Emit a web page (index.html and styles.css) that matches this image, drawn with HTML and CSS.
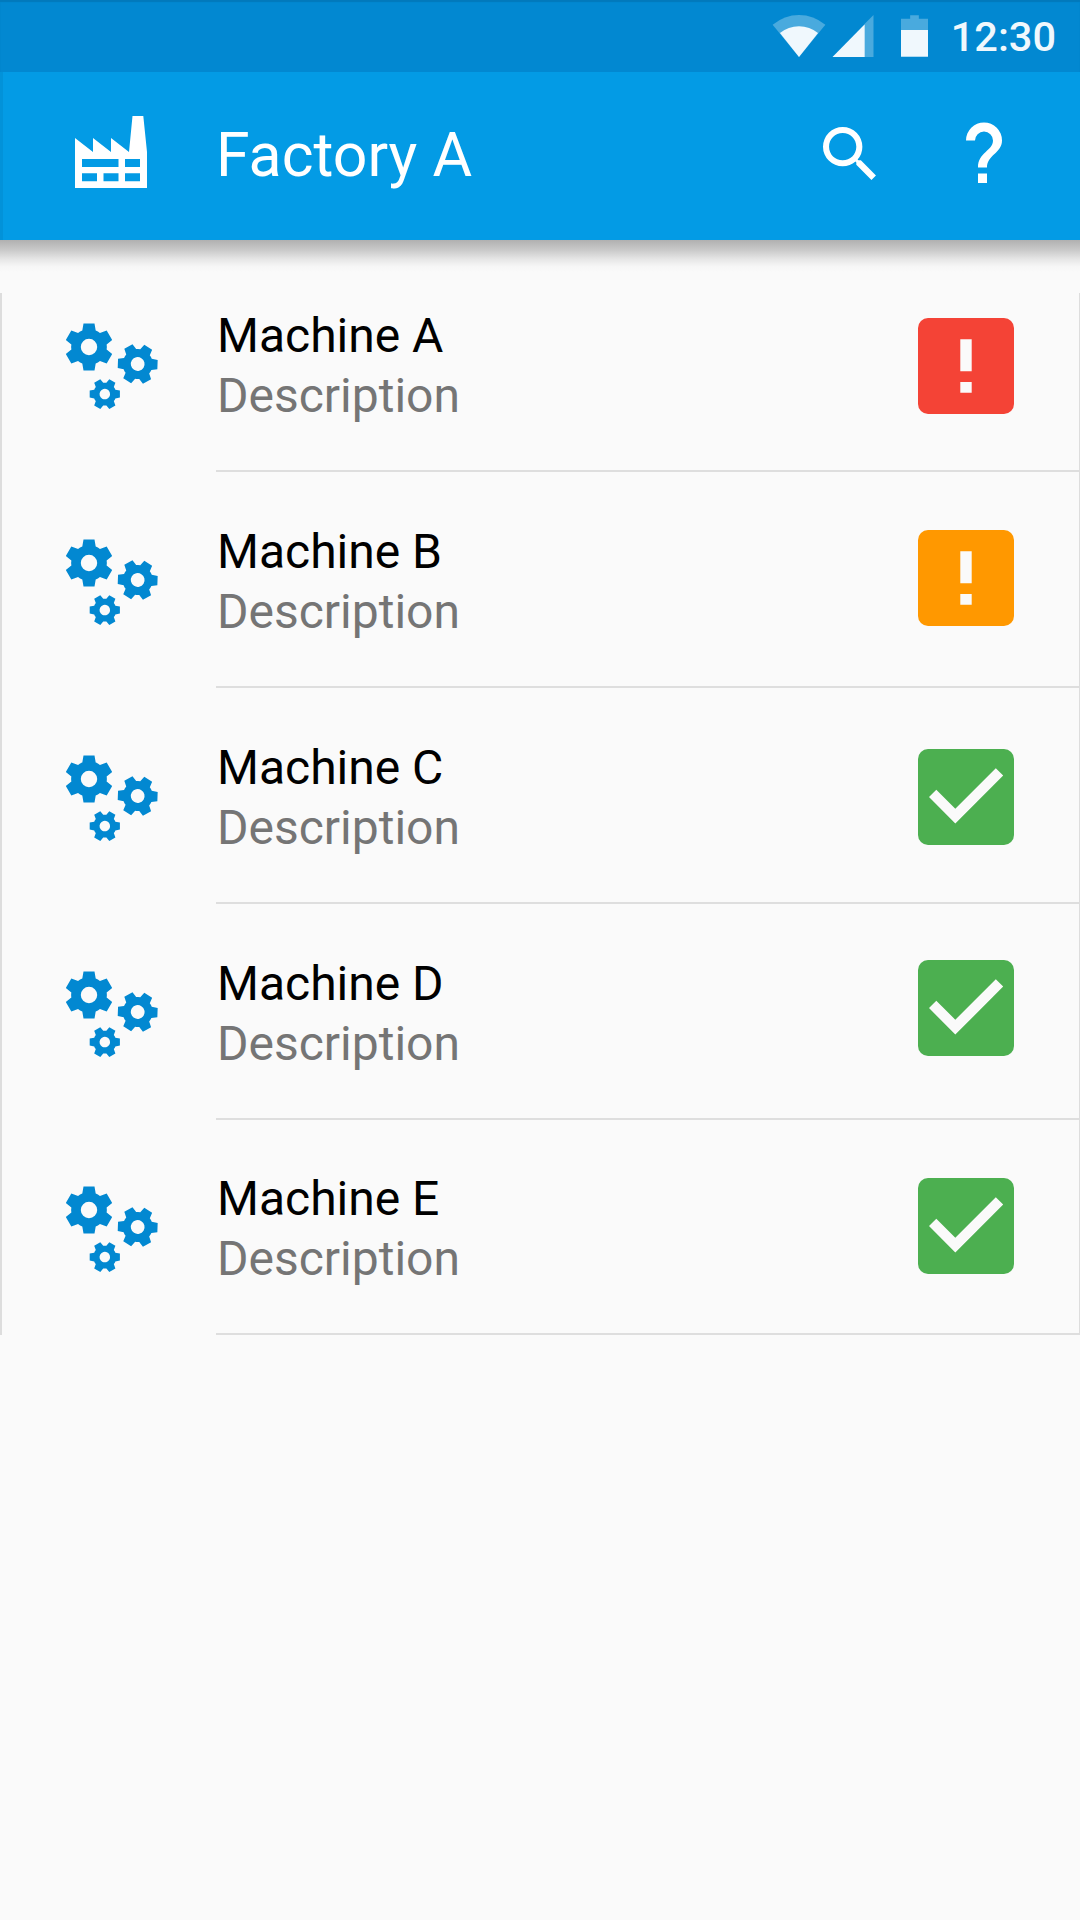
FILE: index.html
```html
<!DOCTYPE html>
<html lang="en">
<head>
<meta charset="utf-8">
<title>Factory A</title>
<link rel="stylesheet" href="styles.css">
</head>
<body>
<svg class="defs" aria-hidden="true">
  <symbol id="gears" viewBox="0 0 96 90">
    <defs>
      <path id="gear" fill-rule="evenodd" d="M-6.7-16.5L-5.5-23.6H5.5L6.7-16.5Q9-15.8 10.94-14.05L17.69-16.56L23.19-7.04L17.64-2.45Q18.1 0 17.64 2.45L23.19 7.04L17.69 16.56L10.94 14.05Q9 15.8 6.7 16.5L5.5 23.6H-5.5L-6.7 16.5Q-9 15.8-10.94 14.05L-17.69 16.56L-23.19 7.04L-17.64 2.45Q-18.1 0-17.64-2.45L-23.19-7.04L-17.69-16.56L-10.94-14.05Q-9-15.8-6.7-16.5ZM8.2 0A8.2 8.2 0 1 0-8.2 0A8.2 8.2 0 1 0 8.2 0Z"/>
    </defs>
    <use href="#gear" transform="translate(25 25)"/>
    <use href="#gear" transform="translate(73.7 42) rotate(32) scale(.84)"/>
    <use href="#gear" transform="translate(40.8 72.1) rotate(30) scale(.64)"/>
  </symbol>
  <symbol id="alert" viewBox="0 0 96 96"><path d="M42.3 21.300H53.700V53.300H42.3ZM42.3 64H53.700V74.700H42.3Z"/></symbol>
  <symbol id="check" viewBox="0 0 96 96"><path d="M11 48L18.3 40.7L37.3 59.7L77.8 19.2L85.2 26.6L37.3 74.6Z"/></symbol>
</svg>
<div class="statusbar">
  <svg class="wifi" viewBox="0 0 54 43"><path fill-opacity=".3" d="M27 43L0 10Q12 0 27 0T54 10Z"/><path d="M27 43L7.5 18.5Q16 11.500 27 11.500T46.500 18.500Z"/></svg>
  <svg class="signal" viewBox="0 0 42 43"><path fill-opacity=".3" d="M33 9L42 0V43H33Z"/><path d="M0 43L33 9.500V43Z"/></svg>
  <svg class="battery" viewBox="0 0 28 43"><path fill-opacity=".3" d="M0 3.500H9.500V0H18.500V3.500H28V15.300H0Z"/><path d="M0 15.300H28V43H0Z"/></svg>
  <span class="clock">12:30</span>
</div>
<header class="appbar">
  <svg class="factory" viewBox="0 0 72 72"><path fill-rule="evenodd" d="M0 72V22L18 36V22L36 36V22L54 36L57.500 0H68.300L72 36V72ZM7 43V51H43.500V43ZM50 43V51H65V43ZM7 57.200V65.200H22V57.200ZM28.500 57.200V65.200H43.500V57.200ZM50 57.200V65.200H65V57.200Z"/></svg>
  <h1 class="title">Factory A</h1>
  <svg class="search" viewBox="3 3 17.500 17.500"><path d="M15.500 14h-.79l-.28-.27A6.470 6.470 0 0 0 16 9.500 6.500 6.500 0 1 0 9.500 16c1.610 0 3.090-.59 4.230-1.570l.27.280v.79l5 4.990L20.490 19l-4.990-5zm-6 0C7.010 14 5 11.990 5 9.500S7.010 5 9.500 5 14 7.010 14 9.500 11.990 14 9.500 14z"/></svg>
  <svg class="help" viewBox="0 0 36 61"><path d="M0 18.500A18 18 0 0 1 36 18.500C36 31 21 33 21 45.500H12C12 30 27 29 27 18.500A9 9 0 1 0 9 18.500ZM12 51.500H21V61H12Z"/></svg>
</header>
<main class="list">
  <div class="row"><svg class="gears"><use href="#gears"/></svg><div class="text"><div class="name">Machine A</div><div class="desc">Description</div></div><svg class="badge error"><use href="#alert"/></svg></div>
  <div class="row"><svg class="gears"><use href="#gears"/></svg><div class="text"><div class="name">Machine B</div><div class="desc">Description</div></div><svg class="badge warning"><use href="#alert"/></svg></div>
  <div class="row"><svg class="gears"><use href="#gears"/></svg><div class="text"><div class="name">Machine C</div><div class="desc">Description</div></div><svg class="badge ok"><use href="#check"/></svg></div>
  <div class="row"><svg class="gears"><use href="#gears"/></svg><div class="text"><div class="name">Machine D</div><div class="desc">Description</div></div><svg class="badge ok"><use href="#check"/></svg></div>
  <div class="row"><svg class="gears"><use href="#gears"/></svg><div class="text"><div class="name">Machine E</div><div class="desc">Description</div></div><svg class="badge ok"><use href="#check"/></svg></div>
</main>
</body>
</html>
```
FILE: styles.css
```css
* { box-sizing: border-box; }
body {
  margin: 0;
  min-height: 1920px;
  background: #fafafa;
  font-family: Roboto, sans-serif;
}
svg { display: block; flex: none; }
.defs { position: absolute; width: 0; height: 0; }
.statusbar {
  display: flex;
  height: 72px;
  padding: 15px 24px 0 0;
  justify-content: flex-end;
  background: #0288d1;
  box-shadow: inset 0 2px 1px #0279bb;
  fill: #f0f8fd;
  color: #f0f8fd;
}
.statusbar svg { height: 42px; }
.wifi { width: 54px; margin-right: 6px; }
.signal { width: 42px; margin-right: 27px; }
.battery { width: 27px; margin-right: 23px; }
.clock { font-size: 41.5px; font-weight: 500; line-height: 44px; }
.appbar {
  position: relative;
  display: flex;
  height: 168px;
  padding-left: 75px;
  background: linear-gradient(90deg, #0292d9 3px, #039be5 3px);
  fill: #fff;
  color: #fff;
}
.appbar::after {
  content: "";
  position: absolute;
  top: 100%;
  left: 0;
  right: 0;
  height: 32px;
  background: linear-gradient(#b0b0b0, #c8c8c8 30%, #e6e6e6 60%, #f6f6f6 82%, #fafafa);
}
.factory { width: 72px; height: 72px; margin-top: 44px; }
.title {
  flex: 1;
  margin: 0 0 0 69px;
  font-size: 60.8px;
  font-weight: 400;
  line-height: 167px;
}
.search { width: 53px; height: 53px; margin: 55px 90px 0 0; }
.help { width: 36px; height: 61px; margin: 50px 78px 0 0; }
.list {
  margin-top: 53px;
  border: solid #ddd;
  border-width: 0 1px 0 2px;
}
.row {
  display: flex;
  height: 216px;
  padding: 65px 65px 0 62px;
  background: linear-gradient(#dedede, #dedede) 214px 100% / 100% 2px no-repeat;
}
.row:first-child { height: 179px; padding-top: 28px; }
.row:last-child { height: 215px; padding-top: 64px; }
.gears { width: 96px; height: 90px; margin-top: 1px; fill: #0288d1; }
.text {
  flex: 1;
  margin: -15px 0 0 57px;
  font-size: 48px;
  line-height: 60px;
}
.name { color: #000; }
.desc { color: #757575; }
.badge { width: 96px; height: 96px; border-radius: 10px; fill: #fafafa; margin-top: -3px; }
.row:nth-child(2) .badge { margin-top: -7px; }
.row:nth-child(3) .badge { margin-top: -4px; }
.row:nth-child(4) .badge { margin-top: -9px; }
.row:nth-child(5) .badge { margin-top: -6px; }
.error { background: #f44336; }
.warning { background: #ff9800; }
.ok { background: #4caf50; }
```
